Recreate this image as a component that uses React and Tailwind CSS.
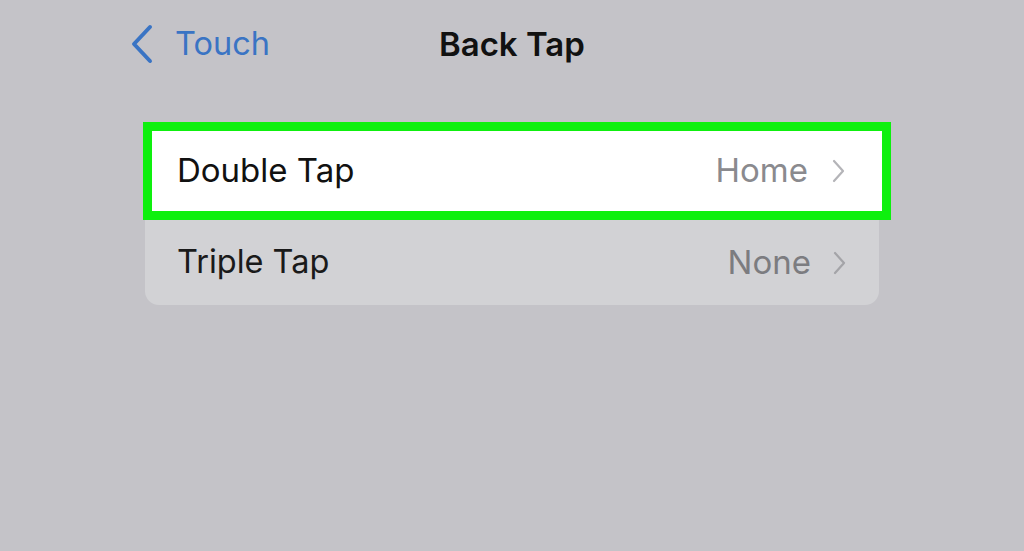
import React from "react";

function Chevron({ className }) {
  return (
    <svg viewBox="0 0 13 24" className={className} fill="none" stroke="currentColor" strokeWidth="2.2" strokeLinecap="round" strokeLinejoin="round">
      <path d="M2 2l9 10-9 10" />
    </svg>
  );
}

export default function App() {
  return (
    <div
      className="w-[1024px] h-[551px] bg-[#c4c3c8] overflow-hidden"
      style={{ fontFamily: "Inter, 'Noto Sans', sans-serif" }}
    >
      <div className="flex items-center h-[88px] pl-[130px]">
        <div className="flex items-center gap-[21px] text-[#3a74c4]">
          <svg viewBox="0 0 24 40" className="w-[24px] h-[40px]" fill="none" stroke="currentColor" strokeWidth="4" strokeLinecap="round" strokeLinejoin="round">
            <path d="M20 3L4 20l16 17" />
          </svg>
          <span className="text-[32.5px] leading-none">Touch</span>
        </div>
        <span className="ml-[169px] text-[33px] leading-none font-semibold text-[#111]">Back Tap</span>
      </div>
      <div className="ml-[145px] mt-[34px] w-[734px] rounded-[14px] bg-[#d2d2d5]">
        <div className="-ml-[2px] w-[748px] h-[98px] border-[9px] border-[#0ef00e] bg-white flex items-center pl-[25px] pr-[37px]">
          <span className="text-[33px] text-[#111]">Double Tap</span>
          <span className="ml-auto text-[33px] text-[#8a8a8e]">Home</span>
          <Chevron className="ml-[24px] w-[13px] h-[24px] text-[#b4b4b8]" />
        </div>
        <div className="h-[85px] flex items-center pl-[32px] pr-[33px]">
          <span className="text-[32.5px] text-[#1a1a1a]">Triple Tap</span>
          <span className="ml-auto text-[33px] text-[#7c7c80]">None</span>
          <Chevron className="ml-[22px] w-[13px] h-[24px] text-[#a4a4a8]" />
        </div>
      </div>
    </div>
  );
}
